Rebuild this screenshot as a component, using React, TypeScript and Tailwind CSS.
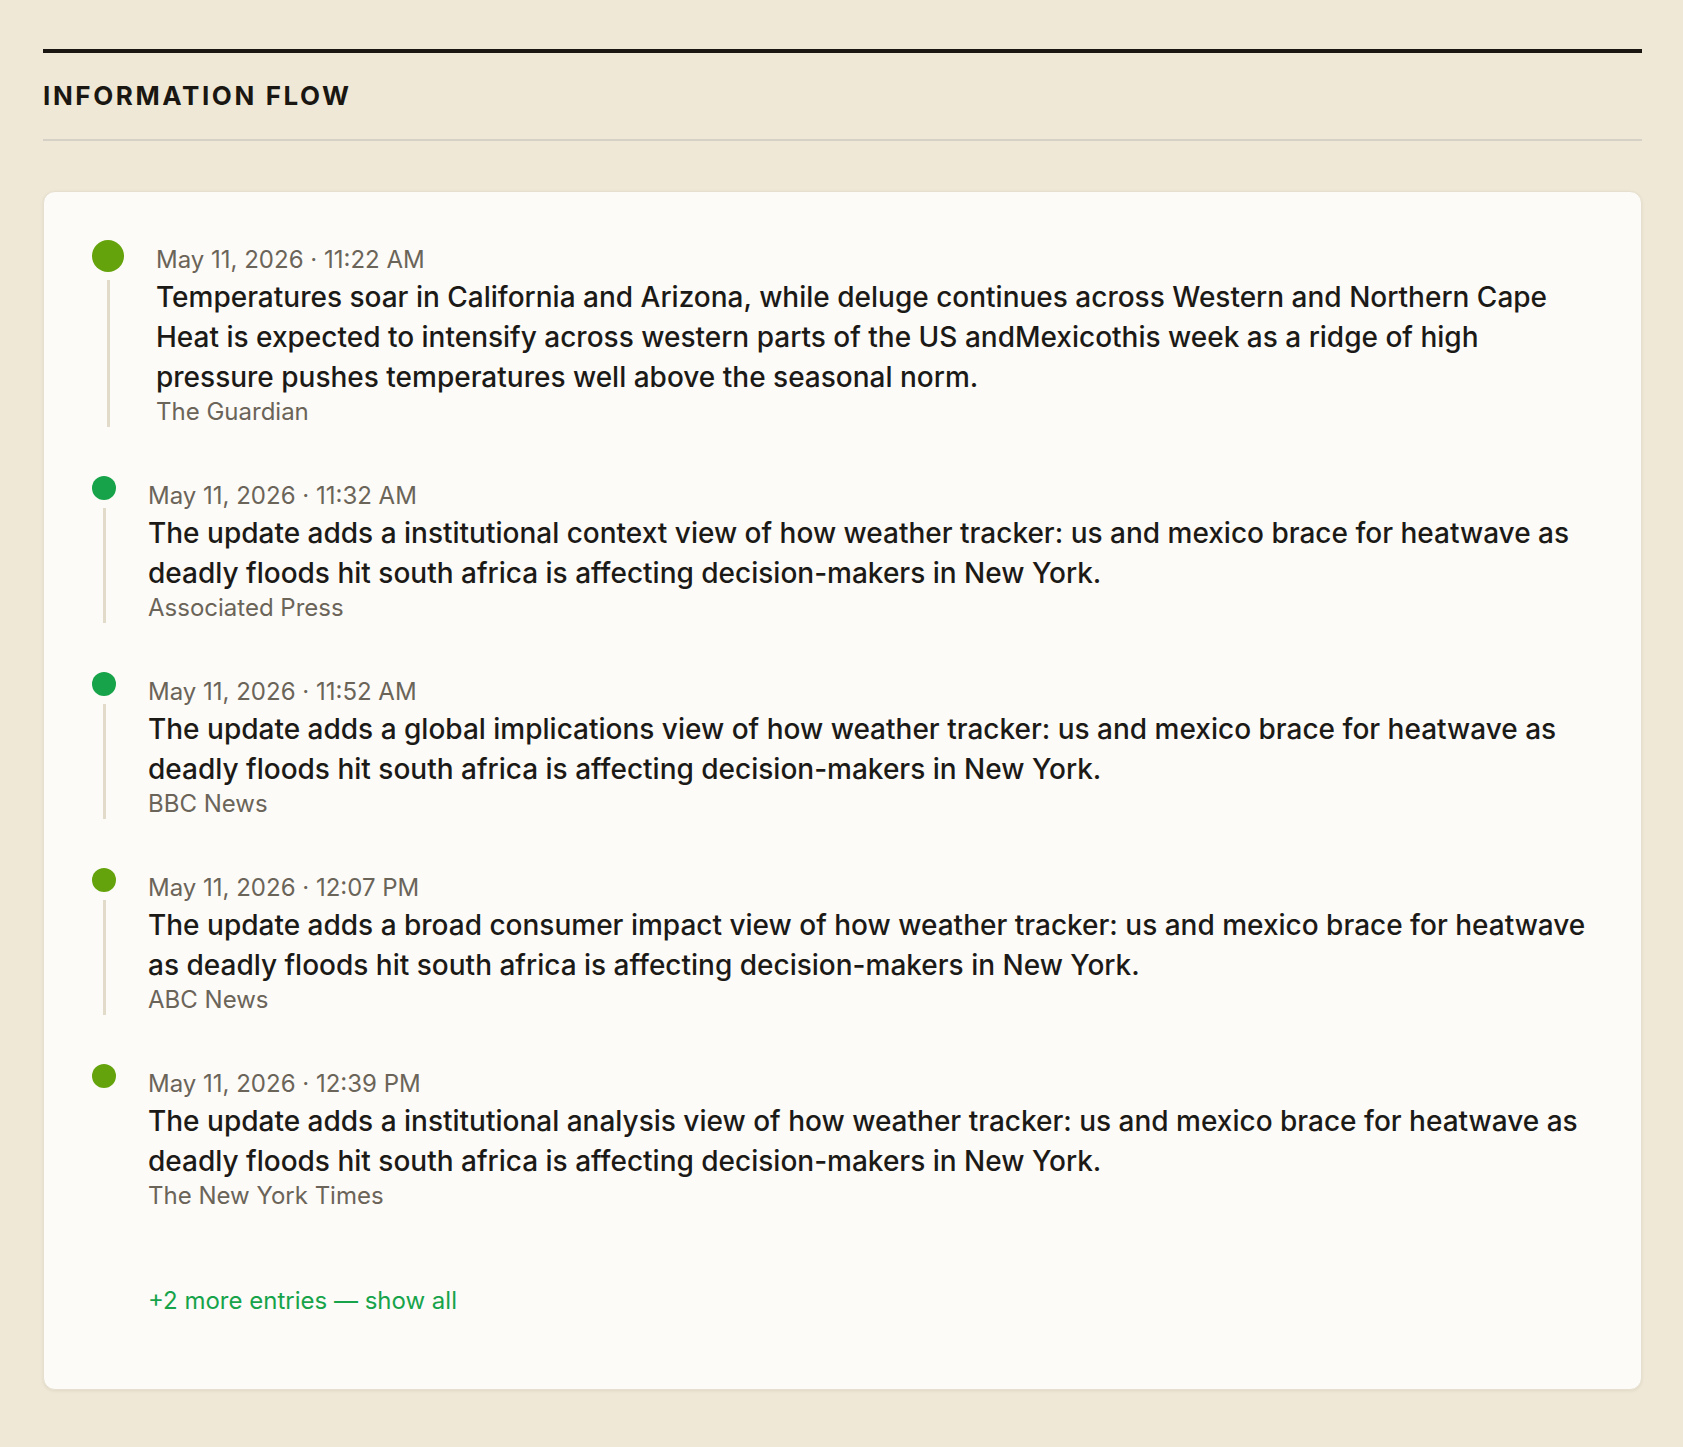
const entries = [
  {
    time: 'May 11, 2026 · 11:22 AM',
    text: 'Temperatures soar in California and Arizona, while deluge continues across Western and Northern Cape Heat is expected to intensify across western parts of the US andMexicothis week as a ridge of high pressure pushes temperatures well above the seasonal norm.',
    source: 'The Guardian',
    dot: 'bg-[#65a30d]',
    lead: true,
  },
  {
    time: 'May 11, 2026 · 11:32 AM',
    text: 'The update adds a institutional context view of how weather tracker: us and mexico brace for heatwave as deadly floods hit south africa is affecting decision-makers in New York.',
    source: 'Associated Press',
    dot: 'bg-[#16a34a]',
  },
  {
    time: 'May 11, 2026 · 11:52 AM',
    text: 'The update adds a global implications view of how weather tracker: us and mexico brace for heatwave as deadly floods hit south africa is affecting decision-makers in New York.',
    source: 'BBC News',
    dot: 'bg-[#16a34a]',
  },
  {
    time: 'May 11, 2026 · 12:07 PM',
    text: 'The update adds a broad consumer impact view of how weather tracker: us and mexico brace for heatwave as deadly floods hit south africa is affecting decision-makers in New York.',
    source: 'ABC News',
    dot: 'bg-[#65a30d]',
  },
  {
    time: 'May 11, 2026 · 12:39 PM',
    text: 'The update adds a institutional analysis view of how weather tracker: us and mexico brace for heatwave as deadly floods hit south africa is affecting decision-makers in New York.',
    source: 'The New York Times',
    dot: 'bg-[#65a30d]',
    last: true,
  },
];

const App = () => {
  return (
    <div className="min-h-screen bg-[#efe8d7] pl-[43px] pr-[41px] pt-[49px] pb-16 font-['Inter',sans-serif]">
      <div className="border-t-4 border-[#1a1712]">
        <h2 className="py-[28px] text-[26px] leading-[30px] font-bold uppercase tracking-[0.1em] text-[#1a1712]">
          Information Flow
        </h2>
      </div>
      <div className="h-[2px] bg-[#d6d1c6]" />

      <div className="mt-[50px] rounded-xl border border-[#e6dfcf] bg-[#fcfbf7] p-12 shadow-[0_1px_3px_rgba(120,100,60,0.12)]">
        <div className="flex flex-col gap-[49px]">
          {entries.map((e) => (
            <div key={e.time} className="flex gap-8">
              <div className="flex flex-col items-center">
                <div className={`${e.lead ? 'h-8 w-8' : 'h-6 w-6'} shrink-0 rounded-full ${e.dot}`} />
                {!e.last && <div className="mt-2 w-[3px] flex-1 bg-[#e2dbc9]" />}
              </div>
              <div className="min-w-0 flex-1 pt-[5px]">
                <p className="text-[24px] leading-[30px] text-[#6b6459]">{e.time}</p>
                <p className="mt-0.5 text-[28px] leading-[40px] font-medium text-[#1c1a17]">{e.text}</p>
                <p className="text-[24px] leading-[30px] text-[#6b6459]">{e.source}</p>
              </div>
            </div>
          ))}
        </div>
        <div className="pt-[75px] pb-[25px] pl-14">
          <span className="text-[24px] leading-[30px] text-[#16a34a]">+2 more entries — show all</span>
        </div>
      </div>
    </div>
  );
};

export default App;
